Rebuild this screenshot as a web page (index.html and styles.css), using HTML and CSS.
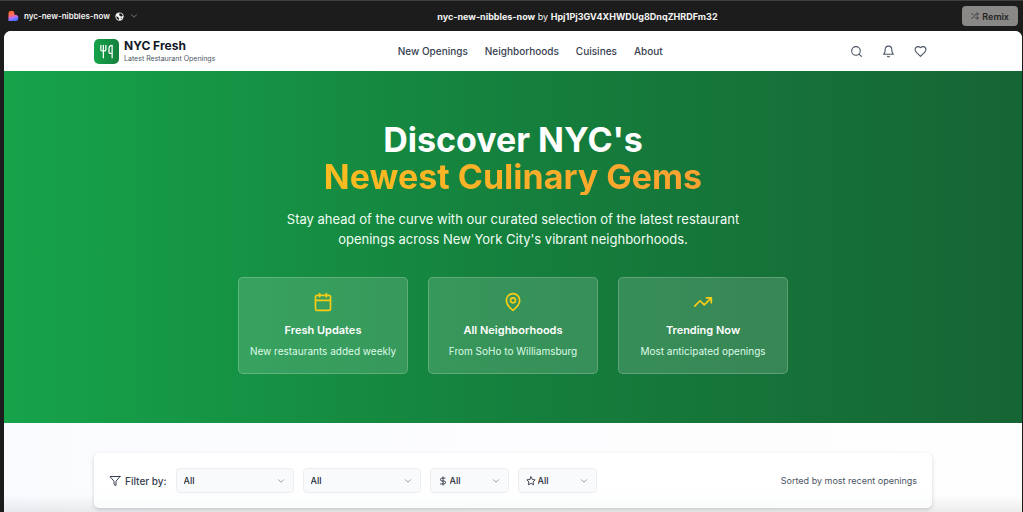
FILE: index.html
```html
<!DOCTYPE html>
<html lang="en">
<head>
  <meta charset="UTF-8">
  <meta name="viewport" content="width=device-width, initial-scale=1.0">
  <title>NYC Fresh</title>
  <link rel="stylesheet" href="styles.css">
</head>
<body>
  <div class="topbar">
    <div class="project">
      <svg class="brand" viewBox="0 0 24 24">
        <defs>
          <linearGradient id="brand-fill" x1="0" y1="0" x2="0.3" y2="1">
            <stop offset="0.1" stop-color="#ff6a1f"/>
            <stop offset="0.5" stop-color="#ff6a70"/>
            <stop offset="0.75" stop-color="#b070ff"/>
            <stop offset="1" stop-color="#4b73ff"/>
          </linearGradient>
        </defs>
        <path fill="url(#brand-fill)" d="M1 7a6.500 6.500 0 0 1 13 0v2.500h2.500a6.800 6.800 0 0 1 0 13.500H1z"/>
      </svg>
      <span>nyc-new-nibbles-now</span>
      <svg class="globe" viewBox="0 0 24 24">
        <circle cx="12" cy="12" r="11" fill="#f4f4f4"/>
        <path fill="#1c1c1c" d="M12 3l5 1 4 5-3 3-4-1-3-3zM3 11l5 2 3 4-1 4-5-3zM15 16l4-1-3 4z"/>
      </svg>
      <svg class="chevron" viewBox="0 0 24 24"><path d="m6 9 6 6 6-6"/></svg>
    </div>
    <p class="owner"><b>nyc-new-nibbles-now</b> by <b>Hpj1Pj3GV4XHWDUg8DnqZHRDFm32</b></p>
    <div class="topbar-end">
      <button class="remix" type="button">
        <svg viewBox="0 0 24 24"><path d="m18 14 4 4-4 4M18 2l4 4-4 4M2 18h2a4 4 0 0 0 3.300-1.700l5.400-8.600A4 4 0 0 1 16 6h6M2 6h2a4 4 0 0 1 3.600 2.200M22 18h-6a4 4 0 0 1-3.300-1.800l-.4-.5"/></svg>
        Remix
      </button>
    </div>
  </div>

  <div class="page">
    <header class="header">
      <div class="container header-row">
        <div class="logo">
          <div class="logo-icon">
            <svg viewBox="0 0 24 24"><path d="M3 2v7c0 1.100.9 2 2 2h4a2 2 0 0 0 2-2V2M7 2v20M21 15V2a5 5 0 0 0-5 5v6c0 1.100.9 2 2 2h3Zm0 0v7"/></svg>
          </div>
          <div>
            <div class="logo-name">NYC Fresh</div>
            <div class="logo-tag">Latest Restaurant Openings</div>
          </div>
        </div>
        <nav class="nav">
          <a href="#">New Openings</a>
          <a href="#">Neighborhoods</a>
          <a href="#">Cuisines</a>
          <a href="#">About</a>
        </nav>
        <div class="actions">
          <button type="button" aria-label="Search">
            <svg viewBox="0 0 24 24"><circle cx="11" cy="11" r="8"/><path d="m21 21-4.300-4.300"/></svg>
          </button>
          <button type="button" aria-label="Notifications">
            <svg viewBox="0 0 24 24"><path d="M6 8a6 6 0 0 1 12 0c0 7 3 9 3 9H3s3-2 3-9M10.300 21a1.940 1.940 0 0 0 3.400 0"/></svg>
          </button>
          <button type="button" aria-label="Favorites">
            <svg viewBox="0 0 24 24"><path d="M19 14c1.490-1.460 3-3.210 3-5.500A5.500 5.500 0 0 0 16.500 3c-1.760 0-3 .5-4.500 2-1.500-1.500-2.740-2-4.500-2A5.500 5.500 0 0 0 2 8.500c0 2.300 1.500 4.050 3 5.500l7 7Z"/></svg>
          </button>
        </div>
      </div>
    </header>

    <section class="hero">
      <h1>Discover NYC's <span class="highlight">Newest Culinary Gems</span></h1>
      <p class="intro">Stay ahead of the curve with our curated selection of the latest restaurant openings across New York City's vibrant neighborhoods.</p>
      <div class="features">
        <div class="feature">
          <svg viewBox="0 0 24 24"><rect x="3" y="4" width="18" height="18" rx="2"/><path d="M8 2v4M16 2v4M3 10h18"/></svg>
          <h3>Fresh Updates</h3>
          <p>New restaurants added weekly</p>
        </div>
        <div class="feature">
          <svg viewBox="0 0 24 24"><path d="M20 10c0 6-8 12-8 12s-8-6-8-12a8 8 0 0 1 16 0Z"/><circle cx="12" cy="10" r="3"/></svg>
          <h3>All Neighborhoods</h3>
          <p>From SoHo to Williamsburg</p>
        </div>
        <div class="feature">
          <svg viewBox="0 0 24 24"><path d="M22 7 13.500 15.500 8.500 10.500 2 17M16 7h6v6"/></svg>
          <h3>Trending Now</h3>
          <p>Most anticipated openings</p>
        </div>
      </div>
    </section>

    <main class="listing">
      <div class="container filters">
        <div class="filter-title">
          <svg viewBox="0 0 24 24"><path d="M22 3H2l8 9.460V19l4 2v-8.540L22 3z"/></svg>
          <span>Filter by:</span>
        </div>
        <div class="select wide">
          <select aria-label="Neighborhood"><option>All</option></select>
          <svg class="chevron" viewBox="0 0 24 24"><path d="m6 9 6 6 6-6"/></svg>
        </div>
        <div class="select wide">
          <select aria-label="Cuisine"><option>All</option></select>
          <svg class="chevron" viewBox="0 0 24 24"><path d="m6 9 6 6 6-6"/></svg>
        </div>
        <div class="select">
          <svg class="kind" viewBox="0 0 24 24"><path d="M12 2v20M17 5H9.500a3.500 3.500 0 0 0 0 7h5a3.500 3.500 0 0 1 0 7H6"/></svg>
          <select aria-label="Price"><option>All</option></select>
          <svg class="chevron" viewBox="0 0 24 24"><path d="m6 9 6 6 6-6"/></svg>
        </div>
        <div class="select">
          <svg class="kind" viewBox="0 0 24 24"><path d="m12 2 3.090 6.260L22 9.270l-5 4.870 1.180 6.880L12 17.770l-6.180 3.250L7 14.140 2 9.270l6.910-1.010z"/></svg>
          <select aria-label="Rating"><option>All</option></select>
          <svg class="chevron" viewBox="0 0 24 24"><path d="m6 9 6 6 6-6"/></svg>
        </div>
        <p class="sorted">Sorted by most recent openings</p>
      </div>
    </main>
  </div>
</body>
</html>
```
FILE: styles.css
```css
* {
  box-sizing: border-box;
}

body {
  margin: 0;
  min-height: 100vh;
  display: flex;
  flex-direction: column;
  background-color: #1c1c1c;
  font-family: Inter, "Liberation Sans", sans-serif;
  font-size: 10px;
  color: #1f2937;
}

h1, h3, p {
  margin: 0;
}

svg {
  display: block;
  flex: none;
  fill: none;
  stroke: currentColor;
  stroke-width: 2;
  stroke-linecap: round;
  stroke-linejoin: round;
}

button, select {
  font-family: inherit;
  border: none;
  background: none;
  padding: 0;
  margin: 0;
  cursor: pointer;
}

/* top bar */
.topbar {
  display: grid;
  grid-template-columns: 10fr auto 7fr;
  align-items: center;
  height: 31px;
  padding: 0 5px 0 8px;
  border-top: 1px solid #404040;
  color: #f4f4f4;
}

.project {
  display: flex;
  align-items: center;
  gap: 5px;
  font-size: 8px;
  font-weight: 600;
}

.brand {
  width: 11px;
  height: 12px;
  stroke: none;
}

.globe {
  width: 9px;
  height: 9px;
  stroke: none;
}

.chevron {
  width: 10px;
  height: 10px;
  color: #858b95;
}

.owner {
  font-size: 9px;
}

.topbar-end {
  display: flex;
  justify-content: flex-end;
}

.remix {
  display: flex;
  align-items: center;
  gap: 3px;
  height: 20px;
  padding: 0 9px;
  border-radius: 4px;
  background-color: #8a8886;
  color: #242424;
  font-size: 9px;
  font-weight: 600;
}

.remix svg {
  width: 8px;
  height: 8px;
}

/* page frame */
.page {
  flex: 1;
  display: flex;
  flex-direction: column;
  margin: 0 1px 0 4px;
  border-radius: 7px 7px 0 0;
  overflow: hidden;
  background-color: #fff;
}

.container {
  width: calc(100% - 40px);
  max-width: 838px;
  margin: 0 auto;
}

.header {
  background-color: #fff;
}

.header-row {
  display: flex;
  align-items: center;
  justify-content: space-between;
  height: 40px;
}

.logo, .actions {
  display: flex;
  align-items: center;
}

.logo {
  gap: 5px;
}

.logo-icon {
  padding: 5px;
  border-radius: 5px;
  background: linear-gradient(to right, #16a34a, #15803d);
  color: #fff;
}

.logo-icon svg {
  width: 15px;
  height: 15px;
}

.logo-name {
  font-size: 12px;
  line-height: 16px;
  font-weight: 700;
  color: #111827;
}

.logo-tag {
  font-size: 7px;
  line-height: 10px;
  color: #4b5563;
}

.nav {
  display: flex;
  gap: 17px;
}

.nav a {
  font-size: 10px;
  font-weight: 500;
  color: #374151;
  text-decoration: none;
}

.actions {
  gap: 9px;
}

.actions button {
  padding: 5px;
  color: #4b5563;
}

.actions svg {
  width: 13px;
  height: 13px;
}

/* hero */
.hero {
  display: flex;
  flex-direction: column;
  align-items: center;
  padding: 50px 20px 49px;
  background: linear-gradient(to right, #16a34a, #15803d 50%, #166534);
  color: #fff;
  text-align: center;
}

h1 {
  width: 100%;
  max-width: 838px;
  font-size: 34px;
  line-height: 37px;
  font-weight: 700;
}

.highlight {
  display: block;
  background: linear-gradient(to right, #facc15, #fb923c);
  background-clip: text;
  -webkit-background-clip: text;
  color: transparent;
}

.intro {
  max-width: 480px;
  margin: 14px 0 28px;
  font-size: 13px;
  line-height: 20px;
  color: #f0fdf4;
}

.features {
  display: grid;
  grid-template-columns: repeat(3, 1fr);
  gap: 20px;
  width: 100%;
  max-width: 550px;
}

.feature {
  display: flex;
  flex-direction: column;
  align-items: center;
  padding: 14px 10px 15px;
  border: 1px solid rgba(255, 255, 255, 0.2);
  border-radius: 5px;
  background-color: rgba(255, 255, 255, 0.15);
}

.feature svg {
  width: 20px;
  height: 20px;
  color: #facc15;
}

.feature h3 {
  margin: 10px 0 6px;
  font-size: 11px;
  line-height: 16px;
  font-weight: 600;
}

.feature p {
  font-size: 10px;
  line-height: 14px;
  color: #dcfce7;
}

/* filters */
.listing {
  flex: 1;
  padding: 30px 0 4px;
  background: linear-gradient(transparent 80%, rgba(0, 0, 0, 0.07)), linear-gradient(to right, #fafbfe, #fefefe);
}

.filters {
  display: flex;
  align-items: center;
  gap: 9px;
  padding: 15px;
  border-radius: 5px;
  background: linear-gradient(#fff 60%, #fafcfb);
  box-shadow: 0 0 1px rgba(0, 0, 0, 0.1), 0 2px 4px rgba(0, 0, 0, 0.15);
}

.filter-title {
  display: flex;
  align-items: center;
  gap: 4px;
  font-weight: 500;
  color: #374151;
}

.filter-title svg {
  width: 12px;
  height: 12px;
}

.select {
  display: flex;
  align-items: center;
  width: 79px;
  height: 25px;
  padding: 0 7px;
  border: 1px solid #eceef1;
  border-radius: 4px;
  background-color: #f9fafb;
}

.select.wide {
  width: 118px;
}

.select select {
  flex: 1;
  min-width: 0;
  appearance: none;
  font-size: 9px;
  font-weight: 500;
  color: #1f2937;
}

.kind {
  width: 10px;
  height: 10px;
  margin-right: 2px;
}

.sorted {
  margin-left: auto;
  font-size: 9px;
  color: #4b5563;
}
```
